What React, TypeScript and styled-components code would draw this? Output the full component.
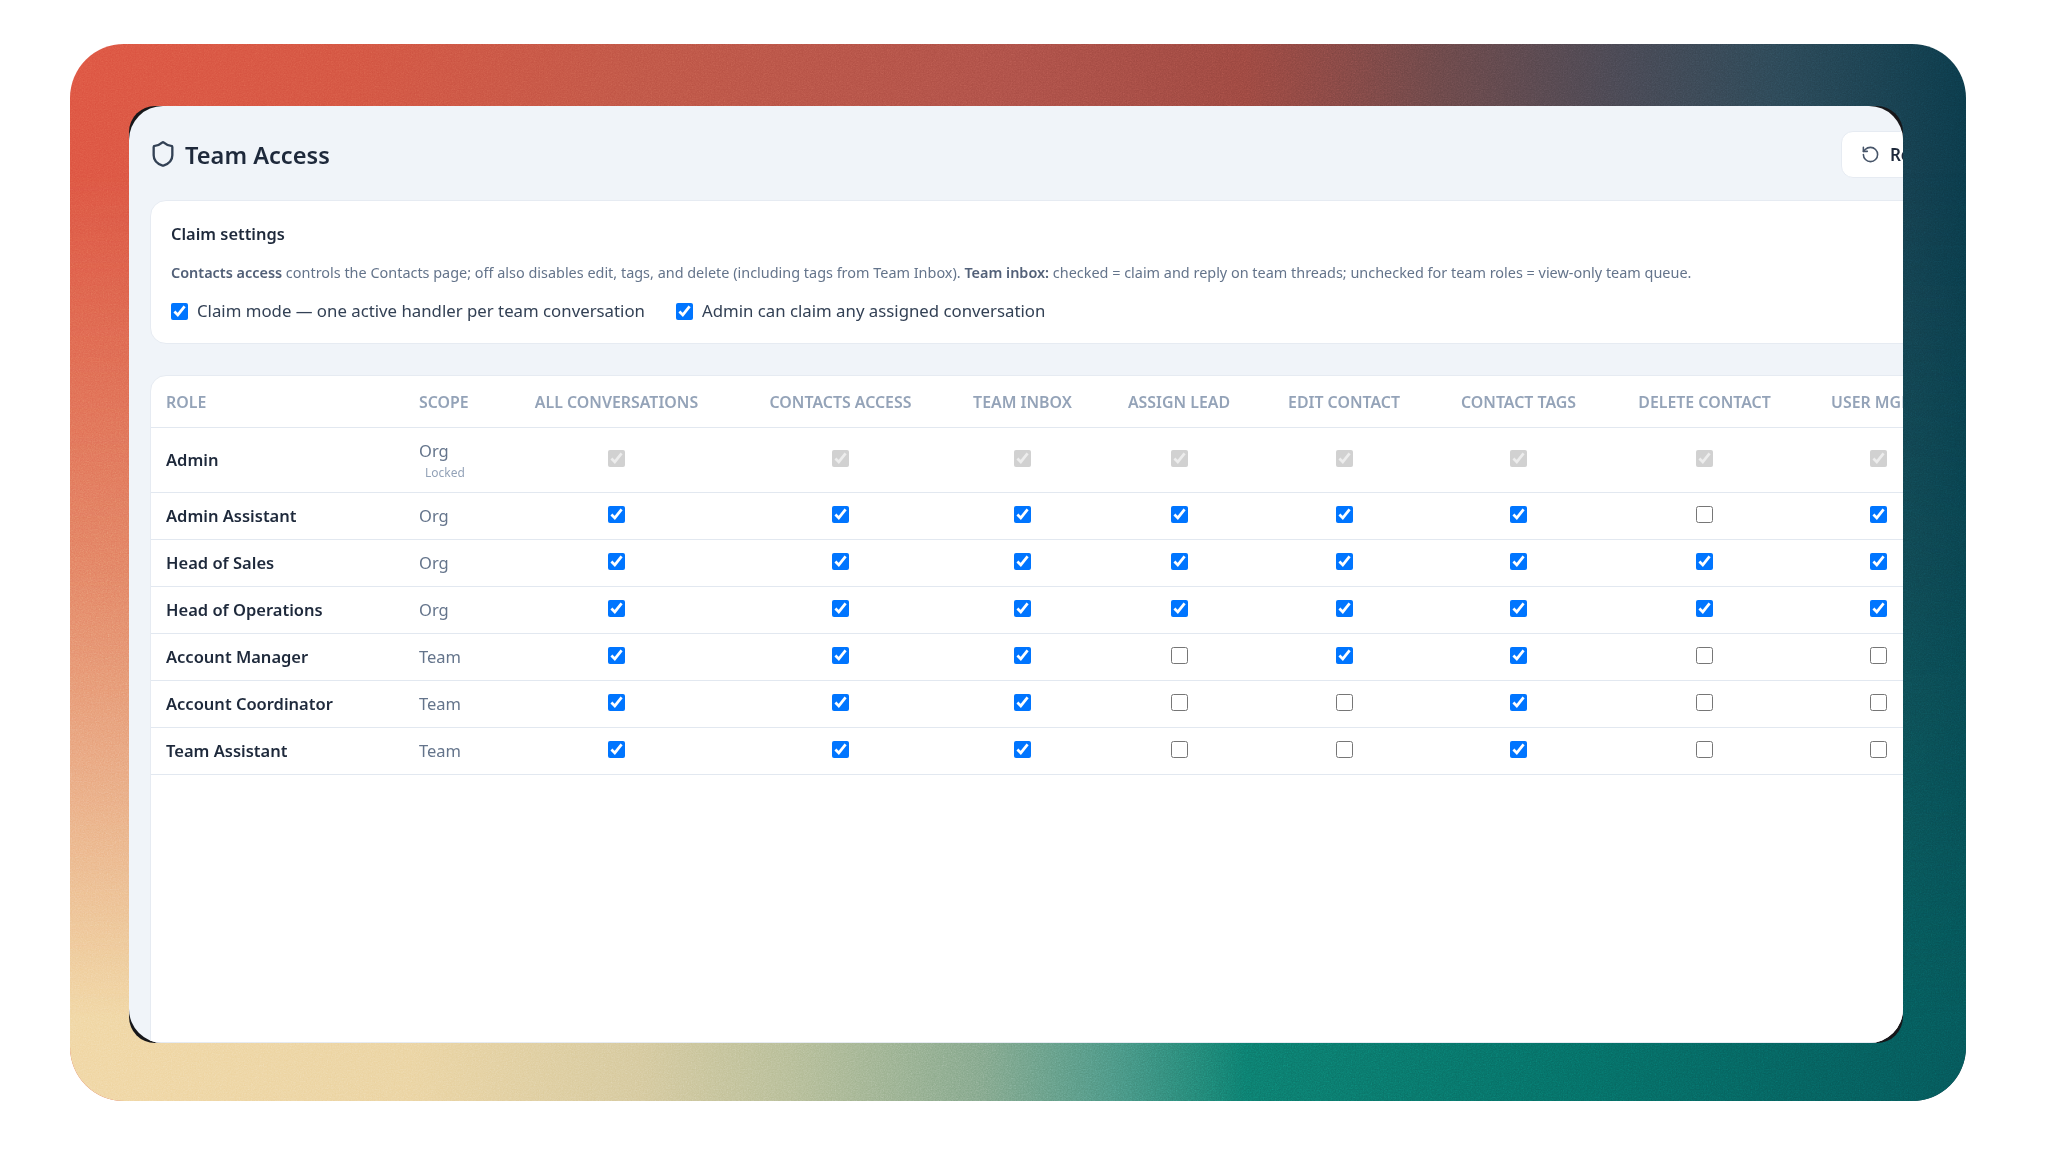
import React from "react";
import styled, { createGlobalStyle } from "styled-components";
import { RotateCcw, Shield } from "lucide-react";

const FONT = `"Noto Sans", "Open Sans", Roboto, sans-serif`;

const columns = [
  { key: "role", label: "Role", width: 253, align: "left" },
  { key: "scope", label: "Scope", width: 116, align: "left" },
  { key: "all", label: "All conversations", width: 193, align: "center" },
  { key: "contacts", label: "Contacts access", width: 255, align: "center" },
  { key: "inbox", label: "Team inbox", width: 109, align: "center" },
  { key: "lead", label: "Assign lead", width: 204, align: "center" },
  { key: "edit", label: "Edit contact", width: 126, align: "center" },
  { key: "tags", label: "Contact tags", width: 223, align: "center" },
  { key: "delete", label: "Delete contact", width: 149, align: "center" },
  { key: "user", label: "User mgmt", width: 198, align: "center" },
];

const roles = [
  { name: "Admin", scope: "Org", locked: true, perms: [1, 1, 1, 1, 1, 1, 1, 1] },
  { name: "Admin Assistant", scope: "Org", perms: [1, 1, 1, 1, 1, 1, 0, 1] },
  { name: "Head of Sales", scope: "Org", perms: [1, 1, 1, 1, 1, 1, 1, 1] },
  { name: "Head of Operations", scope: "Org", perms: [1, 1, 1, 1, 1, 1, 1, 1] },
  { name: "Account Manager", scope: "Team", perms: [1, 1, 1, 0, 1, 1, 0, 0] },
  { name: "Account Coordinator", scope: "Team", perms: [1, 1, 1, 0, 0, 1, 0, 0] },
  { name: "Team Assistant", scope: "Team", perms: [1, 1, 1, 0, 0, 1, 0, 0] },
];

const App = () => {
  return (
    <Page>
      <GlobalStyle />
      <Frame>
        <Grain aria-hidden="true">
          <filter id="grain">
            <feTurbulence type="fractalNoise" baseFrequency="0.75" numOctaves="2" />
            <feColorMatrix type="saturate" values="0" />
          </filter>
          <rect width="100%" height="100%" filter="url(#grain)" />
        </Grain>
        <Bezel>
          <Panel>
            <Content>
              <Header>
                <Title>
                  <Shield size={28} strokeWidth={2} color="#334155" />
                  Team Access
                </Title>
                <ResetButton type="button">
                  <RotateCcw size={19} strokeWidth={2} color="#475569" />
                  Reset to defaults
                </ResetButton>
              </Header>

              <SettingsCard>
                <SettingsTitle>Claim settings</SettingsTitle>
                <Description>
                  <strong>Contacts access</strong> controls the Contacts page; off also
                  disables edit, tags, and delete (including tags from Team Inbox).{" "}
                  <strong>Team inbox:</strong> checked = claim and reply on team threads;
                  unchecked for team roles = view-only team queue.
                </Description>
                <Options>
                  <Option>
                    <Check type="checkbox" defaultChecked />
                    Claim mode — one active handler per team conversation
                  </Option>
                  <Option>
                    <Check type="checkbox" defaultChecked />
                    Admin can claim any assigned conversation
                  </Option>
                </Options>
              </SettingsCard>

              <TableCard>
                <Table>
                  <colgroup>
                    {columns.map((c) => (
                      <col key={c.key} width={c.width} />
                    ))}
                  </colgroup>
                  <thead>
                    <tr>
                      {columns.map((c) => (
                        <HeadCell key={c.key} $align={c.align}>
                          {c.label}
                        </HeadCell>
                      ))}
                    </tr>
                  </thead>
                  <tbody>
                    {roles.map((r) => (
                      <Row key={r.name} $locked={r.locked}>
                        <RoleCell>{r.name}</RoleCell>
                        <ScopeCell>
                          {r.scope}
                          {r.locked && <Locked>Locked</Locked>}
                        </ScopeCell>
                        {r.perms.map((p, i) => (
                          <CheckCell key={i}>
                            <RowCheck
                              type="checkbox"
                              defaultChecked={!!p}
                              disabled={r.locked}
                            />
                          </CheckCell>
                        ))}
                      </Row>
                    ))}
                  </tbody>
                </Table>
              </TableCard>
            </Content>
          </Panel>
        </Bezel>
      </Frame>
    </Page>
  );
};

export default App;

const GlobalStyle = createGlobalStyle`
  html, body {
    margin: 0;
    padding: 0;
    background: #fff;
  }
  * {
    box-sizing: border-box;
  }
`;

const Page = styled.div`
  width: 2048px;
  height: 1152px;
  padding: 44px 82px 51px 70px;
  overflow: hidden;
  font-family: ${FONT};
`;

const Frame = styled.div`
  position: relative;
  height: 100%;
  padding: 62px 63px 58px 59px;
  border-radius: 54px;
  overflow: hidden;
  background: linear-gradient(
    to right,
    #dc5240 0%,
    #d25240 15%,
    #bd5344 30%,
    #aa4d45 50%,
    #98453e 62%,
    #684546 72%,
    #454550 82%,
    #2b4553 90%,
    #0b3847 100%
  );

  &::before {
    content: "";
    position: absolute;
    inset: 0;
    background: linear-gradient(
      to right,
      #f0d5a0 0%,
      #eAD29e 18%,
      #d4c79a 30%,
      #b4bb94 38%,
      #80a488 48%,
      #4a9280 55%,
      #0c786a 62%,
      #056a62 80%,
      #055456 100%
    );
    -webkit-mask-image: linear-gradient(
      to bottom,
      transparent 12%,
      rgba(0, 0, 0, 0.35) 50%,
      #000 92%
    );
    mask-image: linear-gradient(
      to bottom,
      transparent 12%,
      rgba(0, 0, 0, 0.35) 50%,
      #000 92%
    );
  }
`;

const Grain = styled.svg`
  position: absolute;
  inset: 0;
  width: 100%;
  height: 100%;
  opacity: 0.4;
  mix-blend-mode: overlay;
`;

const Bezel = styled.div`
  position: relative;
  height: 100%;
  background: #17171a;
  border-radius: 26px;
  overflow: hidden;
`;

const Panel = styled.div`
  height: 100%;
  background: #f0f4f9;
  border-radius: 34px;
  overflow: hidden;
  padding-left: 21px;
`;

const Content = styled.div`
  width: 1899px;
  height: 100%;
  display: flex;
  flex-direction: column;
`;

const Header = styled.div`
  height: 94px;
  flex: none;
  display: flex;
  align-items: center;
  justify-content: space-between;
`;

const Title = styled.h1`
  margin: 4px 0 0 -1px;
  display: flex;
  align-items: center;
  gap: 8px;
  font-size: 23.6px;
  font-weight: 600;
  color: #1e293b;

  svg {
    margin-top: -2px;
  }
`;

const ResetButton = styled.button`
  height: 47px;
  margin-top: 2px;
  padding: 0 18px 0 19px;
  display: flex;
  align-items: center;
  gap: 10px;
  background: #fff;
  border: 1.5px solid #e6ebf2;
  border-radius: 12px;
  font-family: inherit;
  font-size: 17px;
  font-weight: 600;
  color: #1e293b;
`;

const SettingsCard = styled.section`
  height: 144px;
  flex: none;
  padding: 21px 20px 0;
  background: #fff;
  border: 1.5px solid #e6ebf2;
  border-radius: 16px;
`;

const SettingsTitle = styled.h2`
  margin: 0;
  font-size: 16.4px;
  line-height: 24px;
  font-weight: 600;
  color: #1e293b;
`;

const Description = styled.p`
  margin: 16px 0 0;
  font-size: 14.43px;
  line-height: 22px;
  color: #64748b;
  white-space: nowrap;

  strong {
    font-weight: 600;
    color: #526078;
  }
`;

const Options = styled.div`
  display: flex;
  gap: 31px;
  margin-top: 15px;
`;

const Option = styled.label`
  display: flex;
  align-items: center;
  gap: 9px;
  font-size: 16.8px;
  line-height: 24px;
  color: #334155;
  white-space: nowrap;
`;

const Check = styled.input`
  width: 17px;
  height: 17px;
  margin: 0;
  flex: none;
`;

const TableCard = styled.section`
  flex: 1;
  margin-top: 31px;
  background: #fff;
  border: 1.5px solid #e6ebf2;
  border-radius: 16px 16px 0 0;
`;

const Table = styled.table`
  width: 1826px;
  table-layout: fixed;
  border-collapse: collapse;
`;

const HeadCell = styled.th<{ $align: string }>`
  height: 51px;
  padding: 2px ${(p) => (p.$align === "left" ? 15 : 0)}px 0;
  text-align: ${(p) => p.$align};
  font-size: 15.9px;
  font-weight: 600;
  color: #94a3b8;
  text-transform: uppercase;
  white-space: nowrap;
  border-bottom: 1.5px solid #e2e8f0;
`;

const Row = styled.tr<{ $locked?: boolean }>`
  height: ${(p) => (p.$locked ? 65 : 47)}px;
  border-bottom: 1.5px solid #e2e8f0;
`;

const RoleCell = styled.td`
  padding: 0 15px;
  font-size: 16.5px;
  font-weight: 600;
  color: #1e293b;
  white-space: nowrap;
`;

const ScopeCell = styled.td`
  padding: 0 15px;
  font-size: 16.5px;
  line-height: 22px;
  color: #64748b;
`;

const Locked = styled.div`
  margin: 3px 0 0 6px;
  font-size: 12px;
  line-height: 15px;
  color: #94a3b8;
`;

const CheckCell = styled.td`
  text-align: center;
`;

const RowCheck = styled.input`
  display: block;
  width: 17px;
  height: 17px;
  margin: 0 auto 3px;
`;
